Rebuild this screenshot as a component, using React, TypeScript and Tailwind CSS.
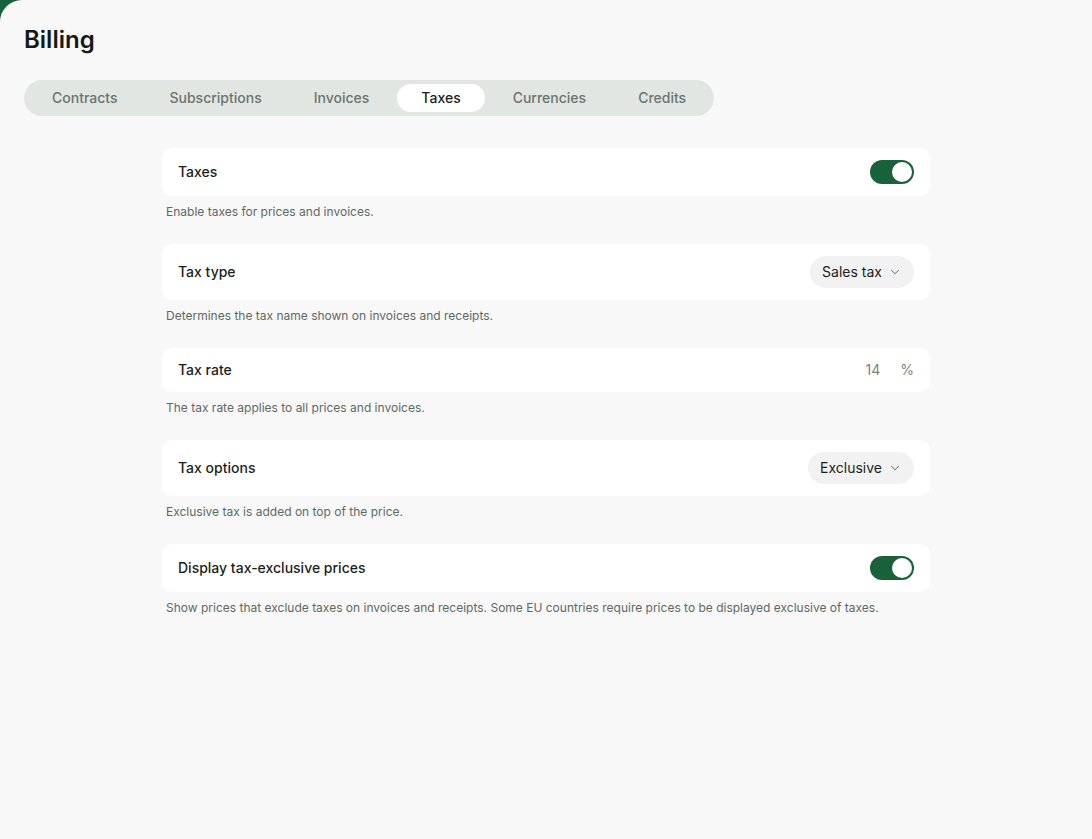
import { ChevronDown } from "lucide-react";

const TABS = ["Contracts", "Subscriptions", "Invoices", "Taxes", "Currencies", "Credits"];

const Toggle = ({ on }: { on: boolean }) => (
  <button
    className={`flex h-6 w-11 items-center rounded-full p-[2px] ${
      on ? "justify-end bg-[#18613a]" : "justify-start bg-[#d4d8d5]"
    }`}
  >
    <span className="h-5 w-5 rounded-full bg-white" />
  </button>
);

const Select = ({ value }: { value: string }) => (
  <button className="flex h-8 items-center gap-1.5 rounded-full bg-[#f1f2f1] pl-3 pr-3 text-sm text-[#1c1f1d]">
    {value}
    <ChevronDown className="h-3.5 w-3.5 text-[#7b837f]" strokeWidth={1.75} />
  </button>
);

const SettingRow = ({
  label,
  description,
  control,
}: {
  label: string;
  description: string;
  control: React.ReactNode;
}) => (
  <div className="flex flex-col">
    <div className="flex items-center justify-between rounded-[10px] bg-white px-4 py-3">
      <span className="text-sm font-medium text-[#1c1f1d]">{label}</span>
      {control}
    </div>
    <p className="mt-2 px-1 text-xs leading-4 text-[#5e6964]">{description}</p>
  </div>
);

export default function App() {
  return (
    <div className="min-h-screen bg-[#18613a] font-['Inter',sans-serif]">
      <div className="min-h-screen rounded-tl-[22px] bg-[#f8f8f8] px-6 pt-7">
        <h1 className="text-2xl font-semibold leading-6 text-[#161917]">Billing</h1>

        <div className="mt-7 inline-flex gap-1 rounded-full bg-[#e2e6e3] p-1">
          {TABS.map((tab) => (
            <button
              key={tab}
              className={`h-7 rounded-full px-6 text-sm font-medium ${
                tab === "Taxes" ? "bg-white text-[#1c1f1d]" : "text-[#6a746f]"
              }`}
            >
              {tab}
            </button>
          ))}
        </div>

        <div className="mx-auto mt-8 flex max-w-[768px] flex-col gap-6">
          <SettingRow
            label="Taxes"
            description="Enable taxes for prices and invoices."
            control={<Toggle on />}
          />
          <SettingRow
            label="Tax type"
            description="Determines the tax name shown on invoices and receipts."
            control={<Select value="Sales tax" />}
          />
          <SettingRow
            label="Tax rate"
            description="The tax rate applies to all prices and invoices."
            control={
              <div className="flex items-center gap-5 text-sm text-[#7b837f]">
                <span>14</span>
                <span>%</span>
              </div>
            }
          />
          <SettingRow
            label="Tax options"
            description="Exclusive tax is added on top of the price."
            control={<Select value="Exclusive" />}
          />
          <SettingRow
            label="Display tax-exclusive prices"
            description="Show prices that exclude taxes on invoices and receipts. Some EU countries require prices to be displayed exclusive of taxes."
            control={<Toggle on />}
          />
        </div>
      </div>
    </div>
  );
}
